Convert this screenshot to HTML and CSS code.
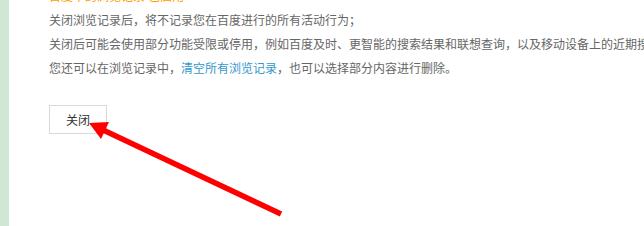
FILE: index.html
```html
<!DOCTYPE html>
<html lang="zh-CN">
<head>
<meta charset="utf-8">
<link rel="stylesheet" href="styles.css">
</head>
<body>
<div class="page">
  <div class="strip"></div>
  <div class="content">
    <p class="status">百度中的浏览记录 已启用</p>
    <p class="line">关闭浏览记录后，将不记录您在百度进行的所有活动行为；</p>
    <p class="line">关闭后可能会使用部分功能受限或停用，例如百度及时、更智能的搜索结果和联想查询，以及移动设备上的近期搜索记录等。</p>
    <p class="line">您还可以在浏览记录中，<a class="link" href="#">清空所有浏览记录</a>，也可以选择部分内容进行删除。</p>
    <button class="btn">关闭</button>
  </div>
  <svg class="arrow" width="644" height="226" viewBox="0 0 644 226">
    <line x1="281" y1="214" x2="101" y2="129" stroke="#ff0000" stroke-width="5.5"/>
    <polygon points="89,123 101,139 109,122" fill="#ff0000"/>
  </svg>
</div>
</body>
</html>
```
FILE: styles.css
```css
html, body {
  margin: 0;
  padding: 0;
  background: #fff;
  overflow: hidden;
}
.page {
  position: relative;
  width: 644px;
  height: 226px;
  display: flex;
  overflow: hidden;
}
.strip {
  width: 9px;
  flex: none;
  background: #cfe8d3;
}
.content {
  padding-left: 40px;
  margin-top: -15px;
  font-family: "Liberation Sans", "Noto Sans CJK SC", sans-serif;
  font-size: 12px;
  color: #666;
  white-space: nowrap;
}
.content p {
  margin: 0;
  line-height: 24px;
}
.status {
  color: #ff9c00;
}
.link {
  color: #3399cc;
  text-decoration: none;
}
.btn {
  margin-top: 24px;
  width: 58px;
  height: 29px;
  background: #fff;
  border: 1px solid #d9d9d9;
  font-family: "Liberation Sans", "Noto Sans CJK SC", sans-serif;
  font-size: 12px;
  color: #333;
  padding: 0;
}
.arrow {
  position: absolute;
  left: 0;
  top: 0;
  pointer-events: none;
}
```
